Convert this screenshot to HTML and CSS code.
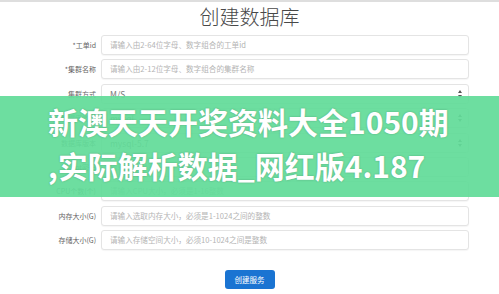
FILE: index.html
```html
<!DOCTYPE html>
<html lang="zh-CN">
<head>
    <meta charset="UTF-8">
    <meta name="viewport" content="width=device-width, initial-scale=1.0">
    <title>创建数据库</title>
    <link rel="stylesheet" href="styles.css">
</head>
<body>
    <div class="topline"></div>

    <!-- Main Form Section -->
    <div class="page">
        <h1 class="title">创建数据库</h1>

        <form class="db-form">
            <label class="field-label">*工单id</label>
            <div class="field"><span class="placeholder">请输入由2-64位字母、数字组合的工单id</span></div>

            <label class="field-label">*集群名称</label>
            <div class="field"><span class="placeholder">请输入由2-12位字母、数字组合的集群名称</span></div>

            <label class="field-label">集群方式</label>
            <div class="field select">
                <span class="value">M/S</span>
                <span class="arrows"><i class="up"></i><i class="down"></i></span>
            </div>

            <label class="field-label">数据库类型</label>
            <div class="field select">
                <span class="value">mysql</span>
                <span class="arrows"><i class="up"></i><i class="down"></i></span>
            </div>

            <label class="field-label">数据库版本</label>
            <div class="field select">
                <span class="value">mysql-5.7</span>
                <span class="arrows"><i class="up"></i><i class="down"></i></span>
            </div>

            <label class="field-label">*root密码</label>
            <div class="field"><span class="placeholder">请输入root密码，不少于8位</span></div>

            <label class="field-label">CPU个数(个)</label>
            <div class="field"><span class="placeholder">请输入CPU大小，必须是1-16整数</span></div>

            <label class="field-label">内存大小(G)</label>
            <div class="field"><span class="placeholder">请输入选取内存大小，必须是1-1024之间的整数</span></div>

            <label class="field-label">存储大小(G)</label>
            <div class="field"><span class="placeholder">请输入存储空间大小，必须10-1024之间是整数</span></div>
        </form>

        <div class="button-container">
            <button type="button" class="submit">创建服务</button>
        </div>
    </div>

    <!-- Banner Overlay -->
    <div class="banner">
        <p class="banner-text">新澳天天开奖资料大全1050期<br>,实际解析数据_网红版4.187</p>
    </div>
</body>
</html>
```

FILE: styles.css
```css
/* Basic Reset */
* {
    margin: 0;
    padding: 0;
    box-sizing: border-box;
}

body {
    font-family: 'Noto Sans CJK SC', 'Liberation Sans', sans-serif;
    background-color: #fff;
    color: #555;
    width: 499px;
    height: 294px;
    overflow: hidden;
    position: relative;
}

.topline {
    height: 2px;
    background-color: #dedede;
}

.page {
    display: flex;
    flex-direction: column;
    align-items: center;
}

.title {
    font-size: 20px;
    font-weight: 300;
    line-height: 29px;
    color: #484848;
    text-align: center;
}

.db-form {
    align-self: flex-start;
    margin-top: 4px;
    display: grid;
    grid-template-columns: 96px 368px;
    grid-auto-rows: 20px;
    column-gap: 5px;
    row-gap: 4.4px;
}

.field-label {
    font-size: 7px;
    color: #666;
    text-align: right;
    line-height: 20px;
    white-space: nowrap;
}

.field {
    border: 1px solid #e4e4e4;
    border-radius: 3px;
    background-color: #fff;
    box-shadow: 0 1px 1px rgba(0, 0, 0, 0.04);
    padding: 0 6px 0 8px;
    font-size: 7.6px;
    line-height: 18px;
    display: flex;
    align-items: center;
    justify-content: space-between;
}

.placeholder {
    color: #b4b4b4;
}

.value {
    color: #777;
    font-size: 8.5px;
}

.arrows {
    display: flex;
    flex-direction: column;
    gap: 2px;
}

.arrows i {
    width: 0;
    height: 0;
    border-left: 2px solid transparent;
    border-right: 2px solid transparent;
}

.arrows .up {
    border-bottom: 3px solid #555;
}

.arrows .down {
    border-top: 3px solid #555;
}

.button-container {
    margin-top: 20px;
    display: flex;
    justify-content: center;
}

.submit {
    width: 50px;
    height: 19px;
    border: none;
    border-radius: 3px;
    background-color: #1a74d2;
    color: #fff;
    font-family: 'Noto Sans CJK SC', sans-serif;
    font-size: 7.5px;
    cursor: pointer;
}

.banner {
    position: absolute;
    left: 0;
    top: 96px;
    width: 100%;
    height: 101px;
    background-color: rgba(98, 220, 153, 0.93);
    padding: 3px 0 0 48px;
}

.banner-text {
    font-size: 30px;
    font-weight: 700;
    line-height: 44px;
    color: #fff;
    white-space: nowrap;
    text-shadow: 0 0 2px rgba(0, 0, 0, 0.25);
}
```
